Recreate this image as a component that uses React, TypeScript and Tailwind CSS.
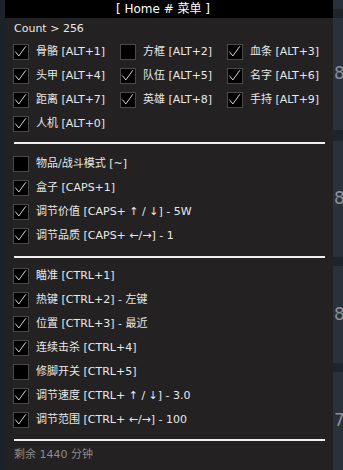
import React from 'react';

type Item = { label: string; checked: boolean };

const grid: Item[] = [
  { label: '骨骼 [ALT+1]', checked: true },
  { label: '方框 [ALT+2]', checked: false },
  { label: '血条 [ALT+3]', checked: true },
  { label: '头甲 [ALT+4]', checked: true },
  { label: '队伍 [ALT+5]', checked: true },
  { label: '名字 [ALT+6]', checked: true },
  { label: '距离 [ALT+7]', checked: true },
  { label: '英雄 [ALT+8]', checked: true },
  { label: '手持 [ALT+9]', checked: true },
  { label: '人机 [ALT+0]', checked: true },
];

const items: Item[] = [
  { label: '物品/战斗模式 [~]', checked: false },
  { label: '盒子 [CAPS+1]', checked: true },
  { label: '调节价值 [CAPS+ ↑ / ↓] - 5W', checked: true },
  { label: '调节品质 [CAPS+ ←/→] - 1', checked: true },
];

const aim: Item[] = [
  { label: '瞄准 [CTRL+1]', checked: true },
  { label: '热键 [CTRL+2] - 左键', checked: true },
  { label: '位置 [CTRL+3] - 最近', checked: true },
  { label: '连续击杀 [CTRL+4]', checked: true },
  { label: '修脚开关 [CTRL+5]', checked: false },
  { label: '调节速度 [CTRL+ ↑ / ↓] - 3.0', checked: true },
  { label: '调节范围 [CTRL+ ←/→] - 100', checked: true },
];

const Box = ({ checked }: { checked: boolean }) => (
  <div className="w-4 h-4 shrink-0 border-[1.5px] border-[#4a4a4a] bg-black flex items-center justify-center">
    {checked && (
      <svg viewBox="0 0 16 16" className="w-[14px] h-[14px]">
        <path d="M1.5 7.5 L5.5 12.5 L13.5 1.5" fill="none" stroke="#f2f2f2" strokeWidth="1" />
      </svg>
    )}
  </div>
);

const Row = ({ item }: { item: Item }) => (
  <div className="h-6 flex items-center gap-[7px] whitespace-nowrap">
    <Box checked={item.checked} />
    <span>{item.label}</span>
  </div>
);

const Divider = ({ className }: { className: string }) => (
  <div className={`h-[2px] bg-[#f0f0f0] mx-[9px] w-[311px] ${className}`} />
);

const bands = [
  { h: 9, dark: false, glyph: '' },
  { h: 9, dark: true, glyph: '' },
  { h: 112, dark: false, glyph: '8' },
  { h: 11, dark: true, glyph: '' },
  { h: 116, dark: false, glyph: '8' },
  { h: 9, dark: true, glyph: '' },
  { h: 97, dark: false, glyph: '8' },
  { h: 9, dark: true, glyph: '' },
  { h: 98, dark: false, glyph: '7' },
];

export default function App() {
  return (
    <div
      className="w-[343px] h-[470px] overflow-hidden flex bg-[#1c232b] text-[11px] text-[#e8e8e8]"
      style={{ fontFamily: '"DejaVu Sans", "Noto Sans CJK SC", sans-serif' }}
    >
      <div className="w-[5px] shrink-0 bg-[#1b222a]" />
      <div className="w-[328px] shrink-0 bg-[#232121] flex flex-col">
        <div className="h-[18px] bg-black flex items-center justify-center pr-3 text-[12px] text-white">
          [ Home # 菜单 ]
        </div>
        <div className="h-[22px] flex items-center pl-[9px] pt-[1px]">Count &gt; 256</div>
        <div className="pl-2 grid grid-cols-[107px_107px_107px]">
          {grid.map((it) => (
            <Row key={it.label} item={it} />
          ))}
        </div>
        <Divider className="mt-[6px] mb-2" />
        <div className="pl-2 flex flex-col">
          {items.map((it) => (
            <Row key={it.label} item={it} />
          ))}
        </div>
        <Divider className="mt-2 mb-[6px]" />
        <div className="pl-2 flex flex-col">
          {aim.map((it) => (
            <Row key={it.label} item={it} />
          ))}
        </div>
        <Divider className="mt-[7px] mb-[6px]" />
        <div className="pl-[9px] h-4 flex items-center text-[#8c8c8c]">剩余 1440 分钟</div>
      </div>
      <div className="flex-1 flex flex-col">
        {bands.map((b, i) => (
          <div
            key={i}
            style={{ height: b.h }}
            className={`shrink-0 flex items-center pl-[1px] text-[17px] text-[#8a9099] ${
              b.dark ? 'bg-[#1d242c]' : 'bg-[#29313a]'
            }`}
          >
            {b.glyph}
          </div>
        ))}
      </div>
    </div>
  );
}
